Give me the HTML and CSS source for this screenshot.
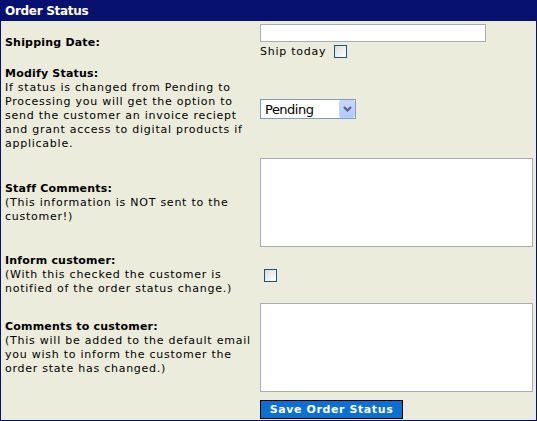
FILE: index.html
```html
<!DOCTYPE html>
<html>
<head>
<meta charset="utf-8">
<title>Order Status</title>
<link rel="stylesheet" href="styles.css">
</head>
<body>
<div class="panel">
  <div class="panel-title">Order Status</div>
  <form class="grid">
    <div class="label"><b>Shipping Date:</b></div>
    <div class="field">
      <input class="text" type="text">
      <div class="ship"><span>Ship today</span><input class="check" type="checkbox"></div>
    </div>

    <div class="label"><b>Modify Status:</b><br>If status is changed from Pending to Processing you will get the option to send the customer an invoice reciept and grant access to digital products if applicable.</div>
    <div class="field">
      <div class="select">
        <select><option>Pending</option><option>Processing</option><option>Delivered</option></select>
        <span class="arrow"><svg width="9" height="6" viewBox="0 0 9 6"><path d="M1 1 L4.5 4.5 L8 1" fill="none" stroke="#4d6185" stroke-width="2"/></svg></span>
      </div>
    </div>

    <div class="label"><b>Staff Comments:</b><br>(This information is NOT sent to the customer!)</div>
    <div class="field"><textarea class="area"></textarea></div>

    <div class="label"><b>Inform customer:</b><br>(With this checked the customer is notified of the order status change.)</div>
    <div class="field"><input class="check inform" type="checkbox"></div>

    <div class="label"><b>Comments to customer:</b><br>(This will be added to the default email you wish to inform the customer the order state has changed.)</div>
    <div class="field"><textarea class="area"></textarea></div>

    <div class="label"></div>
    <div class="field"><button class="save" type="button">Save Order Status</button></div>
  </form>
</div>
</body>
</html>
```
FILE: styles.css
```css
html, body {
  margin: 0;
  padding: 0;
}
body {
  font-family: "DejaVu Sans", Verdana, sans-serif;
  font-size: 11px;
  color: #000;
}
.panel {
  box-sizing: border-box;
  width: 537px;
  height: 421px;
  border: 1px solid #071170;
  border-top: 0;
  background: #ececdc;
  overflow: hidden;
}
.panel-title {
  background: #071170;
  color: #fff;
  font-weight: bold;
  font-size: 12px;
  letter-spacing: -0.3px;
  height: 21px;
  line-height: 20px;
  padding: 1px 0 0 5px;
  box-sizing: border-box;
  margin: 0 -1px;
}
.grid {
  display: grid;
  grid-template-columns: 259px 1fr;
  align-items: center;
  margin: 0;
  line-height: 14px;
  letter-spacing: 0.75px;
}
.grid b {
  letter-spacing: 0.2px;
}
.label {
  padding: 3px 6px 3px 4px;
}
.field {
  padding: 3px 2px 3px 0;
}
.text {
  display: block;
  box-sizing: border-box;
  width: 226px;
  height: 18px;
  margin: 0;
  border: 1px solid #a5acb2;
  background: #fff;
  padding: 0 2px;
  font: inherit;
}
.ship {
  display: flex;
  align-items: center;
  height: 19px;
}
.check {
  -webkit-appearance: none;
  appearance: none;
  box-sizing: border-box;
  width: 13px;
  height: 13px;
  margin: 0;
  border: 1px solid #1c5180;
  background: linear-gradient(135deg, #dcdcd7 0%, #f6f6f4 70%, #ffffff 100%);
  border-radius: 0;
}
.ship .check {
  margin-left: 8px;
}
.inform {
  display: block;
  margin-left: 4px;
}
.select {
  position: relative;
  width: 96px;
  height: 20px;
}
.select select {
  -webkit-appearance: none;
  appearance: none;
  box-sizing: border-box;
  width: 96px;
  height: 20px;
  margin: 0;
  border: 1px solid #7f9db9;
  background: #fff;
  border-radius: 0;
  font-family: "DejaVu Sans", Verdana, sans-serif;
  font-size: 13px;
  letter-spacing: -0.5px;
  padding: 0 0 0 4px;
  color: #000;
}
.arrow {
  position: absolute;
  right: 1px;
  top: 1px;
  box-sizing: border-box;
  width: 16px;
  height: 18px;
  border: 1px solid #c3d3fd;
  border-radius: 2px;
  background: linear-gradient(180deg, #c6d7fc 0%, #b4c9f6 100%);
  display: flex;
  align-items: center;
  justify-content: center;
  pointer-events: none;
}
.area {
  display: block;
  box-sizing: border-box;
  width: 273px;
  height: 89px;
  margin: 1px 0;
  border: 1px solid #a5acb2;
  background: #fff;
  resize: none;
  font: inherit;
}
.save {
  display: block;
  box-sizing: border-box;
  width: 143px;
  height: 19px;
  margin: 1px 0 0;
  padding: 0;
  border: 1px solid #000;
  background: #0c6fd2;
  color: #fff;
  font-family: "DejaVu Sans", Verdana, sans-serif;
  font-weight: bold;
  font-size: 11px;
  letter-spacing: 0.6px;
  line-height: 16px;
}
```
